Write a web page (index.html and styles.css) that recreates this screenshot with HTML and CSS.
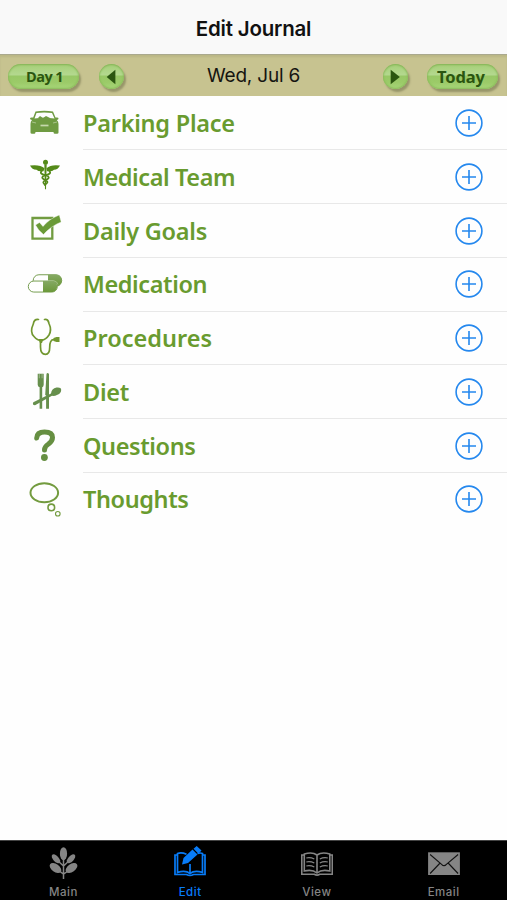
FILE: index.html
```html
<!DOCTYPE html>
<html lang="en">
<head>
<meta charset="utf-8">
<title>Edit Journal</title>
<link rel="stylesheet" href="styles.css">
</head>
<body>
<div class="app">
<header class="title-bar"><h1>Edit Journal</h1></header>
<nav class="date-bar">
  <button class="pill day">Day 1</button>
  <button class="round" aria-label="Previous day"><svg width="26" height="26" viewBox="0 0 26 26"><path d="M17 5.500v15L8 13z" fill="#2b5610"/></svg></button>
  <span class="date">Wed, Jul 6</span>
  <button class="round" aria-label="Next day"><svg width="26" height="26" viewBox="0 0 26 26"><path d="M8 5.500v15L17.500 13z" fill="#2b5610"/></svg></button>
  <button class="pill today">Today</button>
</nav>
<svg class="defs" width="0" height="0"><symbol id="plus" viewBox="0 0 28 28"><circle cx="14" cy="14" r="12.900"/><path d="M14 7v14M7 14h14"/></symbol></svg>
<main class="list">
  <div class="row">
    <svg class="icon" viewBox="0 96 83 53.750"><path fill="#6f9b42" fill-rule="evenodd" d="M35.500 111.500Q44.300 110 53 111.500L55.500 117.500Q58.700 117 58.500 118.500Q58.500 119.500 56.800 120Q58.500 121.500 58.500 124V132.500Q58.500 133.700 57 133.700H54.500Q53.500 133.700 53.500 132H35.500Q35.500 133.700 34.500 133.700H32Q30.500 133.700 30.500 132.500V124Q30.500 121.500 32 120Q30 119.500 30 118.500Q30 117 33.200 117.500ZM36.500 113L34.500 118.500Q44 117 54.500 118.500L52 113Q44 112 36.500 113Z"/><path d="M38 118l2-2 3 2 3-2 4 2z" fill="#6f9b42"/><path d="M40.500 125.500h8" stroke="#c5d8ac" stroke-width="1.700"/><path d="M32 122l4 1M57 122l-4 1" stroke="#a9c48b"/></svg>
    <div class="cell"><span class="label snug">Parking Place</span><svg class="plus"><use href="#plus"/></svg></div>
  </div>
  <div class="row">
    <svg class="icon" viewBox="0 149.750 83 53.750"><g fill="#548a19"><circle cx="45.500" cy="162" r="2.500"/><path d="M44.500 168Q40 164 30 165.300Q32 169.500 36.500 169.500Q38 171.500 43.500 171ZM46.500 168Q51 164 60 165.300Q58 169.500 54 169.500Q52.500 171.500 47 171Z"/><path d="M44.300 164h2.400L46 189h-1z"/></g><path d="M42 170.500Q38.500 173.500 45.500 175Q52 177 45.500 180Q41 182 45.500 184.500M49 170.500Q52.500 173.500 45.500 175Q39 177 45.500 180Q50 182 44 185" fill="none" stroke="#548a19" stroke-width="1.700"/></svg>
    <div class="cell"><span class="label tight">Medical Team</span><svg class="plus"><use href="#plus"/></svg></div>
  </div>
  <div class="row">
    <svg class="icon" viewBox="0 203.500 83 53.750"><path d="M32.500 217.500H52.300V238.200H32.500Z" fill="none" stroke="#719c40" stroke-width="2.300"/><path d="M35.500 224.500L39.500 222L43 226Q49 218.500 59.300 214.500L61.200 221.500Q51 225.500 43.500 234Q38.500 230.500 35.500 224.500Z" fill="#6a9a37" stroke="#fff" stroke-width=".4"/></svg>
    <div class="cell"><span class="label snug">Daily Goals</span><svg class="plus"><use href="#plus"/></svg></div>
  </div>
  <div class="row">
    <svg class="icon" viewBox="0 257.250 83 53.750"><defs><linearGradient id="pill" x2="0" y2="1"><stop stop-color="#85a963"/><stop offset="1" stop-color="#6b9839"/></linearGradient></defs><rect x="33.200" y="275" width="28.500" height="11.500" rx="5.750" fill="#fff" stroke="#779e51"/><path d="M48 275h8c8 0 7.500 11.500 0 11.500h-8z" fill="url(#pill)"/><rect x="28.300" y="281.300" width="29" height="11" rx="5.500" fill="#fff" stroke="#779e51"/><path d="M43 281.300h8.500c7.500 0 7.500 11 0 11H43z" fill="url(#pill)"/><path d="M43.500 280.800h10q4 1 4.500 4" fill="none" stroke="#bcd1a6" stroke-width=".6"/></svg>
    <div class="cell"><span class="label tight">Medication</span><svg class="plus"><use href="#plus"/></svg></div>
  </div>
  <div class="row">
    <svg class="icon" viewBox="0 311 83 53.750"><g fill="none" stroke="#71972f" stroke-width="1.700" stroke-linecap="round"><path d="M38.500 319.500Q34 319 33.300 324Q29.500 332 34 336.500Q38 341 41.500 340.500Q46 339.500 49 335Q52 330 49 323.500Q48 318.500 44.500 319.500"/><path d="M40.500 341V347Q40.500 354.300 45.500 354.300Q49.700 354.300 49.700 347.500Q49.500 339.500 54 339.700"/></g><path d="M38.500 339h5l-1.500 4h-2zM53.500 338l3-1h3v5h-3l-3-1z" fill="#71972f"/></svg>
    <div class="cell"><span class="label">Procedures</span><svg class="plus"><use href="#plus"/></svg></div>
  </div>
  <div class="row">
    <svg class="icon" viewBox="0 364.750 83 53.750"><g fill="#668f4c"><path d="M37.700 373.500h6v11q-.2 2-1.500 2.500V408.500h-2.600V387q-1.700-.5-1.900-2.500z"/><path d="M46.500 373.500q1.500-1.500 2.500.5v34.500h-2.900V395h-.9z"/><path d="M33.300 402L51 393.200Q51.500 388.500 56.500 387.300Q61 386.700 61.200 389.500Q61.200 393 57.500 394.500Q54.500 396 52 395.600L35 405Q32 405 33.300 402Z"/></g><path d="M39.300 373v5M42.100 373v5" stroke="#d2dfc8" stroke-width=".5"/></svg>
    <div class="cell"><span class="label snug">Diet</span><svg class="plus"><use href="#plus"/></svg></div>
  </div>
  <div class="row">
    <svg class="icon" viewBox="0 418.500 83 53.750"><path d="M36.700 437.500Q37 431.500 44.500 431.500Q52.500 431.500 52.500 437Q52.500 440.500 48.500 443.500Q44.500 446 44.500 449.500" fill="none" stroke="#668f42" stroke-width="5" stroke-linecap="round"/><circle cx="44.400" cy="457" r="3.400" fill="#668f42"/></svg>
    <div class="cell"><span class="label tight">Questions</span><svg class="plus"><use href="#plus"/></svg></div>
  </div>
  <div class="row last">
    <svg class="icon" viewBox="0 472.250 83 53.750"><g fill="none" stroke="#739b3f"><ellipse cx="44.300" cy="493" rx="13.800" ry="9.500" stroke-width="2"/><circle cx="51.300" cy="507.700" r="3.300" stroke-width="1.600"/><circle cx="57.800" cy="514" r="2.300" stroke-width="1.100"/></g></svg>
    <div class="cell"><span class="label tight">Thoughts</span><svg class="plus"><use href="#plus"/></svg></div>
  </div>
</main>
<footer class="tabs">
  <a class="tab"><svg viewBox="48 845 32 36"><g fill="#858585"><ellipse cx="64.500" cy="853.700" rx="3.600" ry="6.500"/><ellipse cx="57" cy="858.800" rx="2.800" ry="5.500" transform="rotate(-43 57 858.800)"/><ellipse cx="72" cy="858.800" rx="2.800" ry="5.500" transform="rotate(43 72 858.800)"/><ellipse cx="56.500" cy="868" rx="3.900" ry="6.600" transform="rotate(-55 56.500 868)"/><ellipse cx="72.500" cy="868" rx="3.900" ry="6.600" transform="rotate(55 72.500 868)"/></g><path d="M64.500 855v24M58 860l6.500 6 6.500-6M59 870l5.500 4 6-4" stroke="#858585" stroke-width="1.500" fill="none"/></svg><span>Main</span></a>
  <a class="tab active"><svg viewBox="174.500 845 32 36"><path d="M187 854.300Q182 852 178 853.500V855H175.500V874.500H187Q190.500 876.500 194 874.500H205.500V855H203V853.500Q201 852.500 198 853.500M178 854V872.500Q186 870 190.500 873.500Q195 870 203 872.500V854M190.500 864V874" fill="none" stroke="#087cf8" stroke-width="1.700"/><path d="M182.500 864.500L184 858L193 849.500L198 854.500L188.500 863ZM194 848.700L197.200 846L202 850.500L199 853.700Z" fill="#087cf8"/></svg><span>Edit</span></a>
  <a class="tab"><svg viewBox="301.700 845 32 36"><g fill="none" stroke="#858585" stroke-width="1.600"><path d="M305 871V854Q313 851.500 317.700 855Q322.500 851.500 330.500 854V871Q322.500 869 317.700 873Q313 869 305 871ZM317.700 855V873M305 855H302.500V874.300H315Q317.700 876 320.500 874.300H333V855H330.500"/><path stroke-width="1.200" d="M307 858q4-1 8 1M307 862q4-1 8 1M307 866q4-1 8 1M328.500 858q-4-1-8 1M328.500 862q-4-1-8 1M328.500 866q-4-1-8 1"/></g></svg><span>View</span></a>
  <a class="tab"><svg viewBox="427.900 845 32 36"><path d="M428 852.300h31.800V875H428z" fill="#858585"/><path d="M430 854.500L441.500 864.300Q444 867 446.300 864.300L458 854.500M430 873.500L440 863M458 873.500L448 863" fill="none" stroke="#111" stroke-width="1.100"/></svg><span>Email</span></a>
</footer>
</div>
</body>
</html>
```
FILE: styles.css
```css
* { box-sizing: border-box; }
body { margin: 0; background: #fefefe; font-family: Inter, "Liberation Sans", sans-serif; }
.app { width: 507px; height: 900px; display: flex; flex-direction: column; overflow: hidden; }
.title-bar { height: 54px; flex: none; background: #f9f9f9; display: flex; align-items: center; justify-content: center; padding-top: 3px; }
.title-bar h1 { margin: 0; font-size: 20.500px; line-height: 26px; font-weight: 600; letter-spacing: -.2px; color: #111; }
.date-bar { height: 42px; flex: none; display: flex; align-items: center; background: #c7c390; border-top: 1px solid #aaa98e; box-shadow: inset 0 2px 2px #bbb886; padding: 2px 9px 0 8px; }
button { border: 0; padding: 0; flex: none; color: #2b5610; background: linear-gradient(#a6cf78, #b3d88e 42%, #98c866 50%, #9ccb69 75%, #a9d77b); box-shadow: 2px 3px 2px #98966a, inset 0 1px 2px #83b455, inset 0 -1px 2px #8bbd5b; font-family: "Noto Sans", sans-serif; font-weight: 700; }
.pill { height: 25px; border-radius: 13px; line-height: 24px; }
.day { width: 71px; font-size: 14.500px; font-family: "Open Sans", sans-serif; letter-spacing: -.6px; padding-left: 2px; }
.today { width: 71px; font-size: 16.500px; letter-spacing: -.1px; padding-right: 3px; }
.round { width: 25px; height: 25px; border-radius: 50%; display: flex; align-items: center; justify-content: center; }
.day + .round { margin-left: 20px; }
.round + .pill { margin-left: 19px; }
.date { flex: 1; text-align: center; font-size: 19px; letter-spacing: -.2px; line-height: 24px; color: #151510; padding-bottom: 1px; }
.defs { display: none; }
.list { flex: 1; background: #fefefe; padding-top: .7px; }
.row { height: 53.750px; display: flex; }
.icon { width: 83px; height: 53.750px; flex: none; margin-top: -.7px; }
.cell { flex: 1; display: flex; align-items: center; justify-content: space-between; padding-right: 24px; border-bottom: 1px solid #e8e8e8; color: #699b2f; font: 600 23.500px/30px "Noto Sans", sans-serif; }
.snug { letter-spacing: -.25px; }
.tight { letter-spacing: -.4px; }
.last .cell { border-color: transparent; }
.plus { width: 28px; height: 28px; fill: none; stroke: #2588ee; stroke-width: 1.600; }
.tabs { height: 60px; flex: none; background: #000; border-top: 1px solid #444; display: flex; }
.tab { flex: 1; display: flex; flex-direction: column; align-items: center; color: #858585; padding-top: 4px; }
.tab svg { width: 32px; height: 36px; }
.tab span { font-size: 11.500px; line-height: 14px; font-weight: 500; letter-spacing: .5px; margin-top: 4px; }
.active { color: #087cf8; }
```
